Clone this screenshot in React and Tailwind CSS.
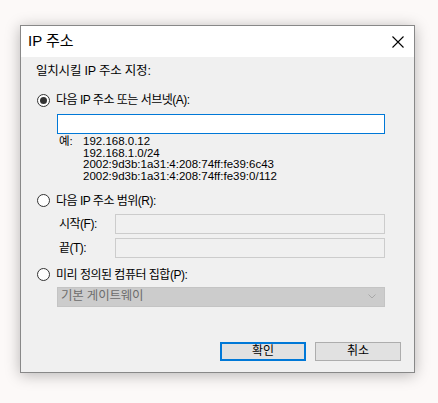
import React from "react";

const font = "font-['Liberation_Sans','Noto_Sans_CJK_KR',sans-serif]";

const Radio = ({ checked, label }) => (
  <div className="flex items-center h-[16px] ml-[1px]">
    <span className="w-[13px] h-[13px] rounded-full border border-[#333] bg-white flex items-center justify-center">
      {checked && <span className="w-[7px] h-[7px] rounded-full bg-[#333]" />}
    </span>
    <span className="ml-[6px] text-[12px] leading-[16px] tracking-[-0.5px] text-black">{label}</span>
  </div>
);

const DisabledInput = () => (
  <div className="w-[270px] h-[20px] border border-[#cccccc] bg-[#f0f0f0]" />
);

export default function App() {
  return (
    <div className={`w-[438px] h-[403px] bg-[#fcf9f8] pt-[25px] pl-[20px] ${font}`}>
      <div className="w-[395px] h-[348px] border border-[#888] bg-[#f0f0f0] shadow-[0_2px_14px_rgba(0,0,0,0.28)] flex flex-col">
        {/* Title bar */}
        <div className="h-[31px] bg-white flex items-center justify-between pl-[7px] pr-[10px]">
          <span className="text-[15px] text-black">IP 주소</span>
          <svg width="12" height="12" viewBox="0 0 12 12">
            <path d="M0.5 0.5 L11.5 11.5 M11.5 0.5 L0.5 11.5" stroke="#000" strokeWidth="1.1" />
          </svg>
        </div>

        {/* Body */}
        <div className="pl-[15px] flex flex-col">
          <div className="mt-[6px] h-[16px] text-[12.5px] leading-[16px] tracking-[-0.2px]">일치시킬 IP 주소 지정:</div>

          <div className="mt-[13px]">
            <Radio checked label="다음 IP 주소 또는 서브넷(A):" />
          </div>
          <div className="ml-[21px] mt-[6px] w-[328px] h-[20px] border border-[#0078d7] bg-white" />
          <div className="ml-[23px] mt-[2px] flex text-[11.5px] leading-[11.7px] text-black">
            <span className="w-[24px]">예:</span>
            <div className="flex flex-col">
              <span>192.168.0.12</span>
              <span>192.168.1.0/24</span>
              <span>2002:9d3b:1a31:4:208:74ff:fe39:6c43</span>
              <span>2002:9d3b:1a31:4:208:74ff:fe39:0/112</span>
            </div>
          </div>

          <div className="mt-[10px]">
            <Radio label="다음 IP 주소 범위(R):" />
          </div>
          <div className="mt-[5px] ml-[23px] flex items-center">
            <span className="w-[56px] text-[12px] tracking-[-0.5px]">시작(F):</span>
            <DisabledInput />
          </div>
          <div className="mt-[4px] ml-[23px] flex items-center">
            <span className="w-[56px] text-[12px] tracking-[-0.5px]">끝(T):</span>
            <DisabledInput />
          </div>

          <div className="mt-[9px]">
            <Radio label="미리 정의된 컴퓨터 집합(P):" />
          </div>
          <div className="ml-[21px] mt-[4px] w-[328px] h-[20px] bg-[#cccccc] border border-[#c4c4c4] flex items-center justify-between pl-[3px] pr-[8px]">
            <span className="text-[12.5px] tracking-[-0.2px] text-[#6d6d6d]">기본 게이트웨이</span>
            <svg width="8" height="5" viewBox="0 0 8 5">
              <path d="M0.5 0.5 L4 4 L7.5 0.5" fill="none" stroke="#a8a8a8" strokeWidth="1" />
            </svg>
          </div>

          <div className="mt-[35px] flex gap-[9px] ml-[184px]">
            <button className="w-[86px] h-[19px] border-2 border-[#0078d7] bg-[#e1e1e1] text-[12px] leading-[14px] text-black">
              확인
            </button>
            <button className="w-[86px] h-[19px] border border-[#adadad] bg-[#e1e1e1] text-[12px] leading-[16px] text-black">
              취소
            </button>
          </div>
        </div>
      </div>
    </div>
  );
}
